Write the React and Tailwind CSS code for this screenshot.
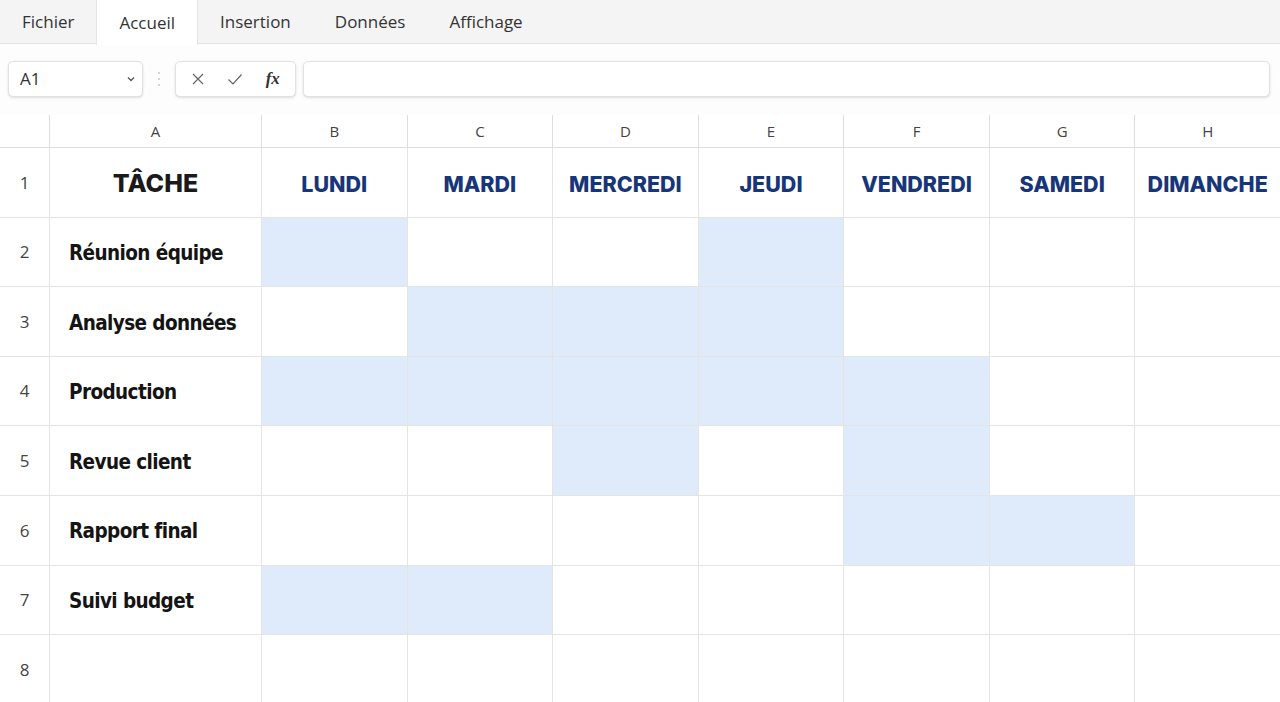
import React from "react";

const tabs = ["Fichier", "Accueil", "Insertion", "Données", "Affichage"];
const cols = ["A", "B", "C", "D", "E", "F", "G", "H"];
const days = ["LUNDI", "MARDI", "MERCREDI", "JEUDI", "VENDREDI", "SAMEDI", "DIMANCHE"];

// lignes de tâches : lettres des colonnes surlignées
const tasks = [
  { name: "Réunion équipe", on: ["B", "E"] },
  { name: "Analyse données", on: ["C", "D", "E"] },
  { name: "Production", on: ["B", "C", "D", "E", "F"] },
  { name: "Revue client", on: ["D", "F"] },
  { name: "Rapport final", on: ["F", "G"] },
  { name: "Suivi budget", on: ["B", "C"] },
  { name: "", on: [] },
];

const uiFont = { fontFamily: '"Open Sans", "Noto Sans", sans-serif' };
const taskFont = { fontFamily: '"DejaVu Sans", sans-serif' };
const dayFont = { fontFamily: 'Inter, "Noto Sans", sans-serif' };

const App = () => {
  return (
    <div className="w-[1280px] h-[702px] overflow-hidden bg-white" style={uiFont}>
      {/* Onglets */}
      <div className="h-[44px] flex bg-[#f4f4f4] border-b border-[#e3e3e3] text-[17px] text-[#333]">
        {tabs.map((t) => (
          <div
            key={t}
            className={
              t === "Accueil"
                ? "px-[22px] flex items-center bg-white border-x border-[#e6e6e6] h-[45px]"
                : "px-[22px] flex items-center"
            }
          >
            {t}
          </div>
        ))}
      </div>

      {/* Barre de formule */}
      <div className="h-[71px] flex items-center gap-0 px-2 pb-[2px] bg-[#fdfdfd]">
        <div className="w-[135px] h-[36px] rounded-[5px] border border-[#e2e2e2] shadow-sm bg-white flex items-center justify-between pl-[11px] pr-[6px] text-[17px] text-[#333]">
          <span>A1</span>
          <svg width="10" height="10" viewBox="0 0 10 10" fill="none" stroke="#555" strokeWidth="1.3">
            <path d="M2 3.5 L5 6.5 L8 3.5" />
          </svg>
        </div>
        <div className="w-[32px] flex flex-col items-center gap-[4px]">
          <span className="w-[2px] h-[2px] rounded-full bg-[#c8c8c8]" />
          <span className="w-[2px] h-[2px] rounded-full bg-[#c8c8c8]" />
          <span className="w-[2px] h-[2px] rounded-full bg-[#c8c8c8]" />
        </div>
        <div className="w-[121px] h-[36px] rounded-[5px] border border-[#e2e2e2] shadow-sm bg-white flex items-center justify-around px-[4px] text-[#555]">
          <svg width="14" height="14" viewBox="0 0 14 14" fill="none" stroke="#666" strokeWidth="1.2">
            <path d="M2 2 L12 12 M12 2 L2 12" />
          </svg>
          <svg width="16" height="14" viewBox="0 0 16 14" fill="none" stroke="#666" strokeWidth="1.2">
            <path d="M1.5 7.5 L6 12 L14.5 2.5" />
          </svg>
          <span className="italic font-bold text-[17px] text-[#333]" style={{ fontFamily: '"Liberation Serif", serif' }}>
            fx
          </span>
        </div>
        <div className="ml-[7px] w-[967px] h-[36px] rounded-[5px] border border-[#e2e2e2] shadow-sm bg-white" />
      </div>

      {/* Grille */}
      <div className="grid grid-cols-[49px_212px_repeat(7,1fr)]">
        <div className="h-[33px] border-b border-[#dedede]" />
        {cols.map((c) => (
          <div
            key={c}
            className="h-[33px] border-l border-b border-[#dedede] flex items-center justify-center text-[15px] text-[#444]"
          >
            {c}
          </div>
        ))}

        {/* Ligne 1 */}
        <div className="h-[69.6px] border-b border-[#e4e4e4] flex items-center justify-center text-[17px] text-[#444]">1</div>
        <div className="h-[69.6px] border-l border-b border-[#e4e4e4] flex items-center justify-center pt-[3px] text-[25px] font-extrabold text-[#1a1a1a]" style={dayFont}>
          TÂCHE
        </div>
        {days.map((d) => (
          <div
            key={d}
            className="h-[69.6px] border-l border-b border-[#e4e4e4] flex items-center justify-center pt-[3px] text-[21.5px] font-extrabold text-[#17367a]"
            style={dayFont}
          >
            {d}
          </div>
        ))}

        {tasks.map((t, i) => (
          <React.Fragment key={i}>
            <div className="h-[69.6px] border-b border-[#e4e4e4] flex items-center justify-center text-[17px] text-[#444]">
              {i + 2}
            </div>
            <div
              className="h-[69.6px] border-l border-b border-[#e4e4e4] flex items-center pl-[19px] pt-[3px] text-[20.5px] font-bold font-stretch-condensed tracking-[-0.6px] text-[#141414]"
              style={taskFont}
            >
              {t.name}
            </div>
            {cols.slice(1).map((c) => (
              <div
                key={c}
                className={
                  t.on.includes(c)
                    ? "h-[69.6px] border-l border-b border-[#e4e4e4] bg-[#dfeafb]"
                    : "h-[69.6px] border-l border-b border-[#e4e4e4]"
                }
              />
            ))}
          </React.Fragment>
        ))}
      </div>
    </div>
  );
};

export default App;
